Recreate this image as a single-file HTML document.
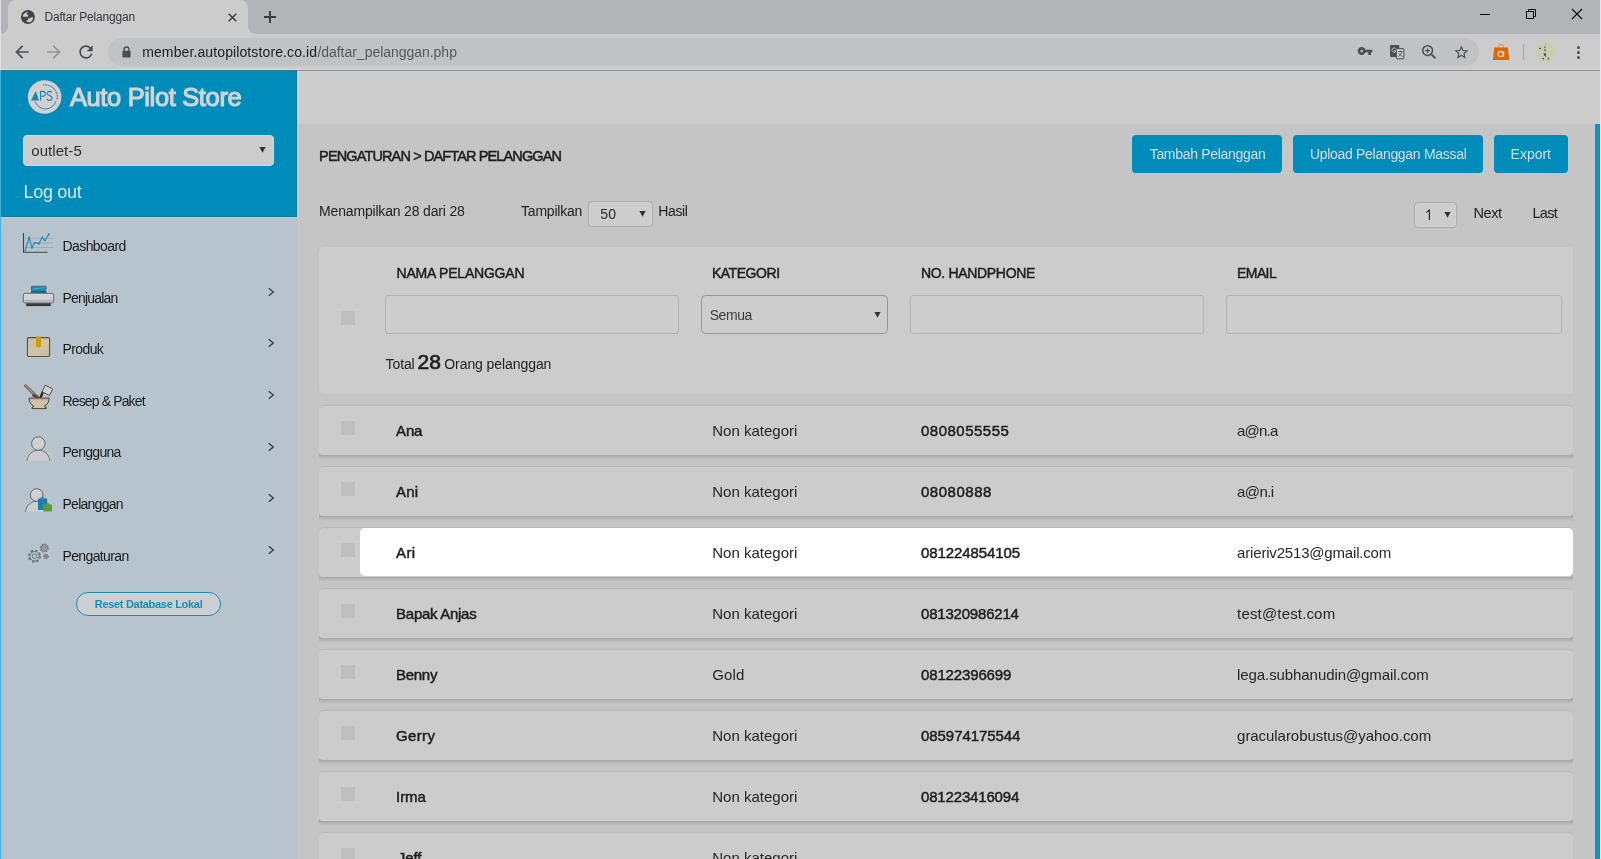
<!DOCTYPE html>
<html><head><meta charset="utf-8"><title>Daftar Pelanggan</title>
<style>
html,body{margin:0;padding:0;}
html{width:1601px;height:859px;overflow:hidden;}
body{width:1601px;height:859px;overflow:hidden;position:relative;background:#c5c5c5;font-family:"Liberation Sans",sans-serif;}
.a{position:absolute;box-sizing:border-box;}
.t{position:absolute;white-space:nowrap;line-height:1;font-family:"Liberation Sans",sans-serif;}
svg{position:absolute;overflow:visible;}
/* chrome */
#tabstrip{left:0;top:0;width:1601px;height:34px;background:#b2b4b8;}
#tab{left:8px;top:0;width:240px;height:34px;background:#cccccc;border-radius:8px 8px 0 0;}
#toolbar{left:0;top:34px;width:1601px;height:36px;background:#cccccc;}
#tbline{left:0;top:70px;width:1601px;height:1px;background:linear-gradient(to right,#2a7c99 0,#2a7c99 297px,#8f9091 297px);}
#tbl2{left:0;top:69px;width:1601px;height:1px;background:#d3d4d5;}
#omni{left:108px;top:38px;width:1371px;height:28px;border-radius:14px;background:#c1c2c3;}
/* page */
#side{left:0;top:71px;width:297px;height:788px;background:#b7c4cd;}
#sidehead{left:0;top:71px;width:297px;height:146px;background:#008cba;}
#topstrip{left:297px;top:71px;width:1304px;height:53px;background:#cdcdcd;}
#mainbg{left:297px;top:124px;width:1304px;height:735px;background:#c5c5c5;}
#sb{left:1595px;top:124px;width:5px;height:735px;background:linear-gradient(to right,#2a7f9c 0,#1a90b8 1px,#1a90b8 4px,#2a7f9c 5px);}
#sbl{left:1592px;top:124px;width:3px;height:735px;background:linear-gradient(to right,#c6c4c4 0,#c8c2c2 2px,#b4cfdb 2px,#b4cfdb 3px);}
#sbr{left:1600px;top:0;width:1px;height:859px;background:#e3eaed;}
#edge0{left:0;top:0;width:1px;height:70px;background:#e0e0e0;}
#edge1{left:0;top:70px;width:1px;height:789px;background:#46b3db;}
.halo{background:#a8d6e6;}
.halod{background:#117a9e;}
.sel{background:#cdcdcd;border:1px solid #ababab;border-radius:4px;box-shadow:inset 0 0 0 1px #d3d3d3;}
.selo{background:#cccccc;border:1px solid #dadada;border-radius:4px;}
.btn{background:#008cba;border-radius:4px;top:135px;height:38px;}
.card{background:#cccccc;border-radius:5px 0 0 5px;box-shadow:0 0 0 .5px #c3c3c3;}
.inp{border:1px solid #b2b2b2;border-radius:3px;background:#cdcdcd;top:295px;height:39px;}
.row{left:319px;width:1254px;height:50px;background:#cccccc;border-radius:5px 5px 4px 4px;border-top:1px solid #bababa;}
.rsh{left:319px;width:1254px;height:10px;background:linear-gradient(to bottom,#c5c5c5 0,#bcbcbc 2.5px,#acacac 4.5px,#a7a7a7 5px,#afafaf 6.2px,#bababa 7.8px,#c2c2c2 9.2px,#c5c5c5 10px);}
.cb{width:14px;height:14px;background:#bfbfbf;left:341px;}
.hl{left:360px;width:1213px;height:48px;background:#ffffff;border-radius:5px;}
#resetbtn{left:76px;top:592px;width:145px;height:24px;border:1.5px solid #1a8db6;border-radius:12px;background:#cbcfd1;}

#txt{position:absolute;left:0;top:0;width:1601px;height:859px;will-change:transform;overflow:hidden;}
#root{position:absolute;left:0;top:0;width:1601px;height:859px;overflow:hidden;}

</style></head>
<body>
<div id="root">
<div class="a" id="tabstrip"></div>
<div class="a" id="tab"></div>
<svg style="left:0;top:26px" width="8" height="8"><path d="M0 8 H8 V0 A8 8 0 0 1 0 8Z" fill="#cccccc"/></svg>
<svg style="left:248px;top:26px" width="8" height="8"><path d="M0 0 V8 H8 A8 8 0 0 1 0 0Z" fill="#cccccc"/></svg>
<div class="a" id="toolbar"></div>
<div class="a" id="tbl2"></div>
<div class="a" id="tbline"></div>
<div class="a" id="omni"></div>
<div class="a" id="edge0"></div>
<!-- globe favicon -->
<svg style="left:20px;top:9px" width="16" height="16" viewBox="0 0 16 16"><circle cx="7.900" cy="8" r="7" fill="#404347"/><path d="M7 3.300C5 3.600 3.200 5 2.800 6.900L2.800 7.700L7.200 7.700C8 7.600 8.600 6.800 8.200 6.200C7.600 5.600 6.600 5.400 6.800 4.800C7 4.200 7.800 4 7.900 3.600Z" fill="#cdcecf"/><path d="M7.400 9.400C9 9.600 10.600 9.200 11.200 8.200L12.900 8.200C13.100 9.800 12.600 11.200 11.600 12.200C10.600 13 9.400 13.300 8.400 13.200C7.200 13 6.400 12.400 6 11.800C7 11.800 8 11.400 8 10.600C8 10 7.600 9.800 7.400 9.400Z" fill="#cdcecf"/></svg>
<!-- tab close -->
<svg style="left:227.5px;top:12.5px" width="9" height="9" viewBox="0 0 9 9"><path d="M.7.7 8.3 8.3M8.3.7.7 8.3" stroke="#3a3d41" stroke-width="1.5" fill="none"/></svg>
<!-- new tab plus -->
<svg style="left:264px;top:11px" width="12" height="12" viewBox="0 0 12 12"><path d="M6 0V12M0 6H12" stroke="#383b3f" stroke-width="1.9" fill="none"/></svg>
<!-- back / forward / reload -->
<svg style="left:12px;top:42px" width="20" height="20" viewBox="0 0 24 24"><path d="M20 11H7.83l5.59-5.59L12 4l-8 8 8 8 1.41-1.41L7.83 13H20v-2z" fill="#4a4d51"/></svg>
<svg style="left:44px;top:42px" width="20" height="20" viewBox="0 0 24 24"><path d="M12 4l-1.41 1.41L16.17 11H4v2h12.17l-5.58 5.59L12 20l8-8z" fill="#939597"/></svg>
<svg style="left:76px;top:42px" width="20" height="20" viewBox="0 0 24 24"><path d="M17.65 6.35A7.958 7.958 0 0 0 12 4c-4.42 0-7.99 3.58-7.99 8s3.57 8 7.99 8c3.73 0 6.84-2.55 7.73-6h-2.08A5.99 5.99 0 0 1 12 18c-3.31 0-6-2.69-6-6s2.69-6 6-6c1.66 0 3.14.69 4.22 1.78L13 11h7V4l-2.35 2.35z" fill="#4a4d51"/></svg>
<!-- lock -->
<svg style="left:121.5px;top:45.5px" width="9" height="12" viewBox="0 0 9 12"><path d="M2.1 5V3.4a2.4 2.4 0 0 1 4.8 0V5" stroke="#4a4d51" stroke-width="1.3" fill="none"/><rect x=".4" y="4.8" width="8.2" height="6.6" rx="1" fill="#4a4d51"/></svg>
<!-- key -->
<svg style="left:1357px;top:43.3px" width="16" height="16" viewBox="0 0 24 24"><path d="M12.65 10C11.83 7.67 9.61 6 7 6c-3.31 0-6 2.69-6 6s2.690 6 6 6c2.61 0 4.83-1.67 5.65-4H17v4h4v-4h2v-4H12.650zM7 14c-1.1 0-2-.9-2-2s.9-2 2-2 2 .9 2 2-.9 2-2 2z" fill="#4a4d51"/></svg>
<!-- translate -->
<svg style="left:1390px;top:45px" width="15" height="15" viewBox="0 0 15 15"><rect x="6.3" y="3.6" width="7.6" height="10.2" rx=".8" fill="#c9cacb" stroke="#4a4d51" stroke-width="1"/><path d="M8.3 6.6h4.2M10.4 5.6v1M11.9 6.8c-.5 2-1.8 3.600-3.600 4.600M9 8.400c.8 1.400 2 2.600 3.600 3.200" stroke="#4a4d51" stroke-width=".9" fill="none"/><path d="M1 .1h7.400a.9.9 0 0 1 .9.9v2.600H6.300v8.400H1a.9.9 0 0 1-.9-.9V1A.9.9 0 0 1 1 .1Z" fill="#4a4d51"/><path d="M5.700 3.700A2.100 2.100 0 1 0 6.100 5.700H4.200" stroke="#c4c5c6" stroke-width=".95" fill="none"/></svg>
<!-- zoom -->
<svg style="left:1420px;top:43px" width="18" height="18" viewBox="0 0 18 18"><circle cx="7.600" cy="7.600" r="4.900" stroke="#4a4d51" stroke-width="1.500" fill="none"/><path d="M11.200 11.200 15.400 15.400" stroke="#4a4d51" stroke-width="1.800"/><path d="M7.600 5.200v4.800M5.200 7.600h4.800" stroke="#4a4d51" stroke-width="1.100"/></svg>
<!-- star -->
<svg style="left:1452.600px;top:44px" width="16.8" height="16.8" viewBox="0 0 24 24"><path d="M22 9.24l-7.190-.62L12 2 9.190 8.630 2 9.240l5.460 4.730L5.820 21 12 17.270 18.180 21l-1.630-7.030L22 9.240zM12 15.400l-3.760 2.270 1-4.280-3.320-2.880 4.380-.38L12 6.100l1.710 4.040 4.380.38-3.320 2.880 1 4.280L12 15.400z" fill="#4a4d51"/></svg>
<!-- extension bag -->
<svg style="left:1492px;top:43px" width="18" height="18" viewBox="0 0 18 18"><path d="M6.600 5V3.700a2.400 2.400 0 0 1 4.800 0V5" stroke="#e08a3a" stroke-width="1" fill="none"/><path d="M2.300 4.600H15.900L17.300 17H.9Z" fill="#d8690a"/><circle cx="8.600" cy="11" r="2.500" stroke="#f0c9a4" stroke-width="1.300" fill="none"/><path d="M11.600 8.100V13.900" stroke="#f0c9a4" stroke-width="1.300"/></svg>
<!-- separator -->
<div class="a" style="left:1523px;top:44px;width:1px;height:16px;background:#a5a6a8;"></div>
<!-- avatar -->
<svg style="left:1536px;top:42px" width="20" height="20" viewBox="0 0 20 20"><circle cx="9.800" cy="10" r="9.800" fill="#c9ccb6"/><path d="M9.200 1.600l.8.400-.5.700ZM8.400 4.200l1.400.5-.6 1.400-.9-.6ZM3 6.200l2.200-.4-.3 1.300-1.700.2ZM8.200 6.900l1.300.3.300 2-1 .4ZM7.400 11.400l2.400-.2.400 2.400-1.800.3-.4-1.200ZM9.800 13.400l.7 1.400-1.100.5ZM6.400 15.800l1.800.5-.3 1.100-1.700-.4ZM11.800 15.600l1.300.4-.7 1.900-.8-.2Z" fill="#4e4a2c"/></svg>
<!-- menu dots -->
<svg style="left:1576px;top:45px" width="5" height="15" viewBox="0 0 5 15"><circle cx="2.500" cy="2.400" r="1.500" fill="#4a4d51"/><circle cx="2.500" cy="7.500" r="1.500" fill="#4a4d51"/><circle cx="2.500" cy="12.600" r="1.500" fill="#4a4d51"/></svg>
<!-- window controls -->
<div class="a" style="left:1480px;top:14px;width:10px;height:1px;background:#0c0c0c;"></div>
<svg style="left:1526px;top:9px" width="10" height="10" viewBox="0 0 10 10"><path d="M2.500 2.500V.5H9.500V7.500H7.500" stroke="#0c0c0c" stroke-width="1" fill="none"/><rect x=".5" y="2.500" width="7" height="7" stroke="#0c0c0c" stroke-width="1" fill="none"/></svg>
<svg style="left:1572px;top:9px" width="10" height="10" viewBox="0 0 10 10"><path d="M0 0 10 10M10 0 0 10" stroke="#0c0c0c" stroke-width="1.100" fill="none"/></svg>

<div class="a" id="side"></div>
<div class="a" id="sidehead"></div>
<div class="a" id="topstrip"></div>
<div class="a" id="mainbg"></div>
<div class="a" id="sbl"></div><div class="a" id="sb"></div><div class="a" id="sbr"></div>
<div class="a halod" style="left:1px;top:216px;width:296px;height:1px;"></div><div class="a halod" style="left:296px;top:71px;width:1px;height:146px;"></div>
<div class="a halo" style="left:1px;top:217px;width:297px;height:1px;"></div><div class="a halo" style="left:297px;top:71px;width:1px;height:146px;"></div>
<div class="a" id="edge1"></div>
<!-- sidebar widgets -->
<div class="a selo" style="left:23px;top:135px;width:251px;height:31px;"></div>
<svg style="left:259px;top:147px" width="8" height="7"><path d="M.4 0H6.600L3.500 5.800Z" fill="#333333"/></svg>
<div class="a" id="resetbtn"></div>
<!-- logo -->
<svg style="left:27px;top:79px" width="36" height="36" viewBox="27 79 36 36">
<circle cx="44.600" cy="97" r="16.800" fill="#d3d0d0"/>
<path d="M31 100.500 35.800 91 38.900 100.500Z" fill="#1587b4"/>
<path d="M40.600 100.500V91.300h2.300a2.300 2.300 0 0 1 0 4.900H40.600" stroke="#1587b4" stroke-width="1.150" fill="none"/>
<path d="M51.700 92.500c-.6-1.500-4.400-1.700-4.400 .9 0 2.600 4.800 1.700 4.800 4.700 0 2.800-4.400 2.900-5.100 .9" stroke="#1587b4" stroke-width="1.150" fill="none"/>
<path d="M35.200 101.400A10.800 10.800 0 0 0 55.900 101.200" stroke="#1f8ab4" stroke-width="1" fill="none"/>
<path d="M43.200 84.900A12.300 12.300 0 0 1 57 99.600" stroke="#2486b0" stroke-width="1.400" stroke-dasharray=".9 .65" fill="none"/>
</svg>
<!-- dashboard -->
<svg style="left:20px;top:230px" width="36" height="26" viewBox="20 230 36 26">
<path d="M25 238.500H53M25 243H53M25 247.500H53" stroke="#a1abb0" stroke-width="1.150"/>
<path d="M23.500 233V252.500M23 252.300H47.500" stroke="#36444c" stroke-width="1.100" fill="none"/>
<path d="M24.800 251.500 29.200 237.600 31.900 248 34.500 242.400 38.900 243.600 42.400 237.200 45 241 48.800 234" stroke="#1a8ab4" stroke-width="1.100" fill="none" stroke-linejoin="round"/>
<g fill="#1a8ab4"><circle cx="29.200" cy="237.600" r="1"/><circle cx="31.900" cy="247.600" r="1"/><circle cx="38.900" cy="243.600" r="1"/><circle cx="42.400" cy="237.400" r="1"/><circle cx="48.800" cy="234.200" r="1"/></g>
</svg>
<!-- penjualan -->
<svg style="left:20px;top:283px" width="36" height="26" viewBox="20 283 36 26">
<path d="M31.500 286.200H45.800L46.800 292.500H30.500Z" fill="#1a8ab4" stroke="#4a5a62" stroke-width=".8"/>
<path d="M32.500 289 45 287.600" stroke="#4fb0d4" stroke-width=".9"/><path d="M31.400 291.700H46" stroke="#12688a" stroke-width="1.500"/><path d="M30.600 289.500 30 292.600M46.700 289.500 47.400 292.600" stroke="#dfe3e5" stroke-width="1"/>
<rect x="23.300" y="293.300" width="30.400" height="9.600" rx="1.600" fill="#d0d4d6" stroke="#5a5e62" stroke-width=".9"/>
<path d="M24.500 300.700H52.500" stroke="#a9aeb1" stroke-width="1.600"/>
<rect x="26.300" y="303.300" width="24.400" height="2.800" fill="#363636"/>
</svg>
<!-- produk -->
<svg style="left:24px;top:334px" width="30" height="26" viewBox="24 334 30 26">
<defs><linearGradient id="bx" x1="0" y1="0" x2="1" y2="1"><stop offset="0" stop-color="#c9bc9c"/><stop offset=".55" stop-color="#d3c6a6"/><stop offset="1" stop-color="#c6b896"/></linearGradient></defs>
<rect x="27.400" y="337.600" width="22.200" height="18.900" rx="1.200" fill="url(#bx)" stroke="#55504a" stroke-width="1.100"/>
<rect x="36" y="336.600" width="5" height="10.600" rx=".8" fill="#cf9a0c"/>
</svg>
<!-- resep -->
<svg style="left:22px;top:382px" width="34" height="30" viewBox="22 382 34 30">
<path d="M25.600 385.700 36.800 396.800" stroke="#5e4a3c" stroke-width="2.800" stroke-linecap="round"/>
<path d="M25.600 385.700 36.800 396.800" stroke="#ad927c" stroke-width="1.500" stroke-linecap="round"/>
<path d="M33.500 395.200 37.800 397.600" stroke="#5e4a3c" stroke-width="3" stroke-linecap="round"/>
<path d="M40.600 397.300 43.200 391.200" stroke="#352c2a" stroke-width="2.500" stroke-linecap="round"/>
<path d="M45.200 385.200 52.800 389 49.400 395.600 42 391.600Z" fill="#d2d0cd" stroke="#5a5048" stroke-width="1" stroke-linejoin="round"/>
<path d="M29 398.100H49.200C49.200 402.500 46.600 405 44.600 405.900L45.200 407.300H46.200V408.600H32V407.300H33L33.600 405.900C31.600 405 29 402.500 29 398.100Z" fill="#d3c0ac" stroke="#4c3e34" stroke-width="1" stroke-linejoin="round"/>
<path d="M30.200 399.700H48" stroke="#bfa993" stroke-width="1"/>
</svg>
<!-- pengguna -->
<svg style="left:24px;top:434px" width="30" height="30" viewBox="24 434 30 30">
<path d="M27 460.800C28 453.800 33 450 38.400 450S48.800 453.800 49.900 460.800Z" fill="#cdcdcd"/>
<path d="M27 460.800C28 453.800 33 450 38.400 450S48.800 453.800 49.900 460.800" fill="none" stroke="#6a6a6a" stroke-width=".9"/>
<circle cx="38.300" cy="443.500" r="6.700" fill="#d0d1d2" stroke="#5a5a5a" stroke-width=".9"/>
</svg>
<!-- pelanggan -->
<svg style="left:22px;top:486px" width="34" height="30" viewBox="22 486 34 30">
<path d="M25.400 511.800C26.400 505 31 501.400 36.600 501.400S44 503 46 507V511.800Z" fill="#cdcdcd"/>
<path d="M25.400 511.800C26.400 505 31 501.400 36.600 501.400" fill="none" stroke="#6a6a6a" stroke-width=".9"/>
<circle cx="36.600" cy="495" r="6.300" fill="#d0d1d2" stroke="#5a5a5a" stroke-width=".9"/>
<path d="M40 498.600c.6-1.300 4.300-1.300 4.900 0" stroke="#1a6f9a" stroke-width=".8" fill="none"/>
<rect x="38" y="498.600" width="9.200" height="11.400" rx=".6" fill="#1a80b4"/>
<path d="M45 504.600c.5-1.100 4-1.100 4.500 0" stroke="#3f7a1c" stroke-width=".8" fill="none"/>
<rect x="43.200" y="504.600" width="8.800" height="6.900" rx=".5" fill="#5e9d2c"/>
</svg>
<!-- pengaturan -->
<svg style="left:24px;top:540px" width="30" height="26" viewBox="24 540 30 26">
<g fill="none" stroke="#6c7074" stroke-width=".95">
<circle cx="34.500" cy="556.200" r="5.300" stroke-dasharray="2.100 2.060" stroke-width="2.600"/>
<circle cx="34.500" cy="556.200" r="4.600" fill="#b7c4cd" stroke="none"/>
<circle cx="34.500" cy="556.200" r="4.700"/>
<circle cx="34.500" cy="556.200" r="2.300"/>
<circle cx="44.300" cy="548" r="3.500" stroke-dasharray="1.400 1.350" stroke-width="2"/>
<circle cx="44.300" cy="548" r="3" fill="#b7c4cd" stroke="none"/>
<circle cx="44.300" cy="548" r="3.100"/>
<circle cx="44.300" cy="548" r="1.400"/>
<circle cx="45.900" cy="556.400" r="2.100" stroke-dasharray="1 .9" stroke-width="1.400"/>
<circle cx="45.900" cy="556.400" r="1.700" fill="#b7c4cd" stroke="none"/>
<circle cx="45.900" cy="556.400" r="1.700"/>
<circle cx="45.900" cy="556.400" r=".6"/>
</g>
</svg>
<svg style="left:267px;top:287.1px" width="8" height="10" viewBox="0 0 8 10"><path d="M1.800 1.200 6.300 5 1.800 8.800" stroke="#34404c" stroke-width="1.350" fill="none"/></svg>
<svg style="left:267px;top:338.3px" width="8" height="10" viewBox="0 0 8 10"><path d="M1.800 1.200 6.300 5 1.800 8.800" stroke="#34404c" stroke-width="1.350" fill="none"/></svg>
<svg style="left:267px;top:390.2px" width="8" height="10" viewBox="0 0 8 10"><path d="M1.800 1.200 6.300 5 1.800 8.800" stroke="#34404c" stroke-width="1.350" fill="none"/></svg>
<svg style="left:267px;top:442.0px" width="8" height="10" viewBox="0 0 8 10"><path d="M1.800 1.200 6.300 5 1.800 8.800" stroke="#34404c" stroke-width="1.350" fill="none"/></svg>
<svg style="left:267px;top:493.3px" width="8" height="10" viewBox="0 0 8 10"><path d="M1.800 1.200 6.300 5 1.800 8.800" stroke="#34404c" stroke-width="1.350" fill="none"/></svg>
<svg style="left:267px;top:545.2px" width="8" height="10" viewBox="0 0 8 10"><path d="M1.800 1.200 6.300 5 1.800 8.800" stroke="#34404c" stroke-width="1.350" fill="none"/></svg>

<!-- main widgets -->
<div class="a btn" style="left:1132px;width:150px;"></div>
<div class="a btn" style="left:1293px;width:190px;"></div>
<div class="a btn" style="left:1494px;width:74px;"></div>
<div class="a sel" style="left:588px;top:201px;width:65px;height:26px;"></div>
<svg style="left:638.5px;top:210.9px" width="8" height="7"><path d="M.4 0H6.600L3.500 5.800Z" fill="#333333"/></svg>
<div class="a sel" style="left:1414px;top:202px;width:43px;height:26px;"></div>
<svg style="left:1424px;top:208px" width="8" height="13" viewBox="0 0 8 13"><!-- one-glyph --><path d="M2.200 4.500C3.500 4 4.400 3.200 4.900 2.100H5.400V11.900" stroke="#2c2c2c" stroke-width="1.250" fill="none"/></svg>
<svg style="left:1443.5px;top:212px" width="8" height="7"><path d="M.4 0H6.600L3.500 5.800Z" fill="#333333"/></svg>
<div class="a card" style="left:319px;top:247px;width:1254px;height:146.6px;"></div>
<div class="a cb" style="top:311px;"></div>
<div class="a inp" style="left:385px;width:294px;"></div>
<div class="a inp" style="left:701px;width:187px;border-color:#979797;border-radius:4.5px;"></div>
<svg style="left:873.7px;top:311.9px" width="8" height="7"><path d="M.4 0H6.600L3.500 5.800Z" fill="#333333"/></svg>
<div class="a inp" style="left:910px;width:294px;"></div>
<div class="a inp" style="left:1226px;width:336px;"></div>
<div class="a rsh" style="top:450px"></div>
<div class="a row" style="top:405px"></div>
<div class="a cb" style="top:421px"></div>
<div class="a rsh" style="top:511px"></div>
<div class="a row" style="top:466px"></div>
<div class="a cb" style="top:482px"></div>
<div class="a rsh" style="top:572px"></div>
<div class="a row" style="top:527px"></div>
<div class="a hl" style="top:528px"></div>
<div class="a cb" style="top:543px"></div>
<div class="a rsh" style="top:633px"></div>
<div class="a row" style="top:588px"></div>
<div class="a cb" style="top:604px"></div>
<div class="a rsh" style="top:694px"></div>
<div class="a row" style="top:649px"></div>
<div class="a cb" style="top:665px"></div>
<div class="a rsh" style="top:755px"></div>
<div class="a row" style="top:710px"></div>
<div class="a cb" style="top:726px"></div>
<div class="a rsh" style="top:816px"></div>
<div class="a row" style="top:771px"></div>
<div class="a cb" style="top:787px"></div>
<div class="a rsh" style="top:877px"></div>
<div class="a row" style="top:832px"></div>
<div class="a cb" style="top:848px"></div>

<!-- text -->
<div id="txt">
<span id="tabt" class="t" style="left:44.4px;top:11.04px;font-size:12px;font-weight:400;color:#34373b;letter-spacing:-0.175px;">Daftar Pelanggan</span>
<span id="url1" class="t" style="left:142.2px;top:45.35px;font-size:14px;font-weight:400;color:#1d1e20;letter-spacing:0.112px;">member.autopilotstore.co.id</span>
<span id="url2" class="t" style="left:317.4px;top:45.35px;font-size:14px;font-weight:400;color:#55595d;letter-spacing:-0.030px;">/daftar_pelanggan.php</span>
<span id="brand" class="t" style="left:69.9px;top:84.61px;font-size:25.5px;font-weight:400;color:#d0d4d6;letter-spacing:-0.355px;-webkit-text-stroke:1.15px #d0d4d6;">Auto Pilot Store</span>
<span id="outlet" class="t" style="left:31.3px;top:142.50px;font-size:15px;font-weight:400;color:#303030;letter-spacing:0.057px;">outlet-5</span>
<span id="logout" class="t" style="left:23.6px;top:183.16px;font-size:18px;font-weight:400;color:#d3e6ee;letter-spacing:-0.323px;">Log out</span>
<span id="m0" class="t" style="left:62.5px;top:238.95px;font-size:14px;font-weight:400;color:#1b1b1b;letter-spacing:-0.578px;">Dashboard</span>
<span id="m1" class="t" style="left:62.5px;top:290.85px;font-size:14px;font-weight:400;color:#1b1b1b;letter-spacing:-0.798px;">Penjualan</span>
<span id="m2" class="t" style="left:62.5px;top:341.75px;font-size:14px;font-weight:400;color:#1b1b1b;letter-spacing:-0.610px;">Produk</span>
<span id="m3" class="t" style="left:62.5px;top:393.85px;font-size:14px;font-weight:400;color:#1b1b1b;letter-spacing:-0.861px;">Resep &amp; Paket</span>
<span id="m4" class="t" style="left:62.5px;top:445.35px;font-size:14px;font-weight:400;color:#1b1b1b;letter-spacing:-0.718px;">Pengguna</span>
<span id="m5" class="t" style="left:62.5px;top:496.85px;font-size:14px;font-weight:400;color:#1b1b1b;letter-spacing:-0.739px;">Pelanggan</span>
<span id="m6" class="t" style="left:62.5px;top:548.75px;font-size:14px;font-weight:400;color:#1b1b1b;letter-spacing:-0.631px;">Pengaturan</span>
<span id="reset" class="t" style="left:94.8px;top:598.59px;font-size:11px;font-weight:700;color:#1a8db6;letter-spacing:-0.306px;">Reset Database Lokal</span>
<span id="bc" class="t" style="left:319.1px;top:148.83px;font-size:14.5px;font-weight:400;color:#1e1e1e;letter-spacing:-0.874px;-webkit-text-stroke:0.48px #1e1e1e;">PENGATURAN &gt; DAFTAR PELANGGAN</span>
<span id="men" class="t" style="left:319.1px;top:203.95px;font-size:14px;font-weight:400;color:#222;letter-spacing:-0.178px;">Menampilkan 28 dari 28</span>
<span id="tam" class="t" style="left:521.0px;top:204.05px;font-size:14px;font-weight:400;color:#222;letter-spacing:-0.203px;">Tampilkan</span>
<span id="s50" class="t" style="left:600.2px;top:207.05px;font-size:14px;font-weight:400;color:#2a2a2a;letter-spacing:0.311px;">50</span>
<span id="has" class="t" style="left:658.3px;top:204.05px;font-size:14px;font-weight:400;color:#222;letter-spacing:-0.385px;">Hasil</span>
<span id="next" class="t" style="left:1473.4px;top:205.83px;font-size:14.5px;font-weight:400;color:#222;letter-spacing:-0.357px;">Next</span>
<span id="last" class="t" style="left:1532.4px;top:205.83px;font-size:14.5px;font-weight:400;color:#222;letter-spacing:-0.655px;">Last</span>
<span id="b1" class="t" style="left:1149.7px;top:146.95px;font-size:14px;font-weight:400;color:#d6dde0;letter-spacing:-0.304px;">Tambah Pelanggan</span>
<span id="b2" class="t" style="left:1309.9px;top:146.95px;font-size:14px;font-weight:400;color:#d6dde0;letter-spacing:-0.298px;">Upload Pelanggan Massal</span>
<span id="b3" class="t" style="left:1510.6px;top:146.95px;font-size:14px;font-weight:400;color:#d6dde0;letter-spacing:-0.011px;">Export</span>
<span id="h1" class="t" style="left:396.6px;top:265.85px;font-size:14px;font-weight:400;color:#1e1e1e;letter-spacing:-0.215px;-webkit-text-stroke:0.46px #1e1e1e;">NAMA PELANGGAN</span>
<span id="h2" class="t" style="left:711.9px;top:265.85px;font-size:14px;font-weight:400;color:#1e1e1e;letter-spacing:-0.452px;-webkit-text-stroke:0.46px #1e1e1e;">KATEGORI</span>
<span id="h3" class="t" style="left:921.0px;top:265.85px;font-size:14px;font-weight:400;color:#1e1e1e;letter-spacing:-0.326px;-webkit-text-stroke:0.46px #1e1e1e;">NO. HANDPHONE</span>
<span id="h4" class="t" style="left:1237.1px;top:265.85px;font-size:14px;font-weight:400;color:#1e1e1e;letter-spacing:-0.603px;-webkit-text-stroke:0.46px #1e1e1e;">EMAIL</span>
<span id="sem" class="t" style="left:709.7px;top:307.95px;font-size:14px;font-weight:400;color:#3a3a3a;letter-spacing:-0.412px;">Semua</span>
<span id="tot" class="t" style="left:385.6px;top:357.05px;font-size:14px;font-weight:400;color:#222;letter-spacing:-0.116px;">Total</span>
<span id="t28" class="t" style="left:417.6px;top:351.12px;font-size:21px;font-weight:400;color:#1e1e1e;letter-spacing:-0.080px;-webkit-text-stroke:0.69px #1e1e1e;">28</span>
<span id="ora" class="t" style="left:444.3px;top:357.05px;font-size:14px;font-weight:400;color:#222;letter-spacing:-0.080px;">Orang pelanggan</span>
<span id="n0" class="t" style="left:396.1px;top:423.10px;font-size:15px;font-weight:400;color:#1e1e1e;letter-spacing:-0.168px;-webkit-text-stroke:0.49px #1e1e1e;">Ana</span>
<span id="k0" class="t" style="left:712.2px;top:423.10px;font-size:15px;font-weight:400;color:#262626;letter-spacing:0.011px;">Non kategori</span>
<span id="p0_" class="t" style="left:921.0px;top:423.10px;font-size:15px;font-weight:400;color:#1e1e1e;letter-spacing:0.486px;-webkit-text-stroke:0.49px #1e1e1e;">0808055555</span>
<span id="e0" class="t" style="left:1237.1px;top:423.10px;font-size:15px;font-weight:400;color:#262626;letter-spacing:-0.824px;">a@n.a</span>
<span id="n1" class="t" style="left:396.1px;top:484.10px;font-size:15px;font-weight:400;color:#1e1e1e;letter-spacing:0.171px;-webkit-text-stroke:0.49px #1e1e1e;">Ani</span>
<span id="k1" class="t" style="left:712.2px;top:484.10px;font-size:15px;font-weight:400;color:#262626;letter-spacing:0.011px;">Non kategori</span>
<span id="p1_" class="t" style="left:921.0px;top:484.10px;font-size:15px;font-weight:400;color:#1e1e1e;letter-spacing:0.519px;-webkit-text-stroke:0.49px #1e1e1e;">08080888</span>
<span id="e1" class="t" style="left:1237.1px;top:484.10px;font-size:15px;font-weight:400;color:#262626;letter-spacing:-0.624px;">a@n.i</span>
<span id="n2" class="t" style="left:396.1px;top:545.10px;font-size:15px;font-weight:400;color:#1e1e1e;letter-spacing:0.385px;-webkit-text-stroke:0.49px #1e1e1e;">Ari</span>
<span id="k2" class="t" style="left:712.2px;top:545.10px;font-size:15px;font-weight:400;color:#262626;letter-spacing:0.011px;">Non kategori</span>
<span id="p2_" class="t" style="left:921.0px;top:545.10px;font-size:15px;font-weight:400;color:#1e1e1e;letter-spacing:-0.092px;-webkit-text-stroke:0.49px #1e1e1e;">081224854105</span>
<span id="e2" class="t" style="left:1237.1px;top:545.10px;font-size:15px;font-weight:400;color:#262626;letter-spacing:-0.181px;">arieriv2513@gmail.com</span>
<span id="n3" class="t" style="left:396.1px;top:606.10px;font-size:15px;font-weight:400;color:#1e1e1e;letter-spacing:-0.282px;-webkit-text-stroke:0.49px #1e1e1e;">Bapak Anjas</span>
<span id="k3" class="t" style="left:712.2px;top:606.10px;font-size:15px;font-weight:400;color:#262626;letter-spacing:0.011px;">Non kategori</span>
<span id="p3_" class="t" style="left:921.0px;top:606.10px;font-size:15px;font-weight:400;color:#1e1e1e;letter-spacing:-0.201px;-webkit-text-stroke:0.49px #1e1e1e;">081320986214</span>
<span id="e3" class="t" style="left:1237.1px;top:606.10px;font-size:15px;font-weight:400;color:#262626;letter-spacing:0.162px;">test@test.com</span>
<span id="n4" class="t" style="left:396.1px;top:667.10px;font-size:15px;font-weight:400;color:#1e1e1e;letter-spacing:-0.309px;-webkit-text-stroke:0.49px #1e1e1e;">Benny</span>
<span id="k4" class="t" style="left:712.2px;top:667.10px;font-size:15px;font-weight:400;color:#262626;letter-spacing:0.128px;">Gold</span>
<span id="p4_" class="t" style="left:921.0px;top:667.10px;font-size:15px;font-weight:400;color:#1e1e1e;letter-spacing:-0.142px;-webkit-text-stroke:0.49px #1e1e1e;">08122396699</span>
<span id="e4" class="t" style="left:1237.1px;top:667.10px;font-size:15px;font-weight:400;color:#262626;letter-spacing:-0.087px;">lega.subhanudin@gmail.com</span>
<span id="n5" class="t" style="left:396.1px;top:728.10px;font-size:15px;font-weight:400;color:#1e1e1e;letter-spacing:0.340px;-webkit-text-stroke:0.49px #1e1e1e;">Gerry</span>
<span id="k5" class="t" style="left:712.2px;top:728.10px;font-size:15px;font-weight:400;color:#262626;letter-spacing:0.011px;">Non kategori</span>
<span id="p5_" class="t" style="left:921.0px;top:728.10px;font-size:15px;font-weight:400;color:#1e1e1e;letter-spacing:-0.059px;-webkit-text-stroke:0.49px #1e1e1e;">085974175544</span>
<span id="e5" class="t" style="left:1237.1px;top:728.10px;font-size:15px;font-weight:400;color:#262626;letter-spacing:-0.054px;">gracularobustus@yahoo.com</span>
<span id="n6" class="t" style="left:396.1px;top:789.10px;font-size:15px;font-weight:400;color:#1e1e1e;letter-spacing:-0.100px;-webkit-text-stroke:0.49px #1e1e1e;">Irma</span>
<span id="k6" class="t" style="left:712.2px;top:789.10px;font-size:15px;font-weight:400;color:#262626;letter-spacing:0.011px;">Non kategori</span>
<span id="p6_" class="t" style="left:921.0px;top:789.10px;font-size:15px;font-weight:400;color:#1e1e1e;letter-spacing:-0.167px;-webkit-text-stroke:0.49px #1e1e1e;">081223416094</span>
<span id="n7" class="t" style="left:397.8px;top:850.10px;font-size:15px;font-weight:400;color:#1e1e1e;letter-spacing:-0.102px;-webkit-text-stroke:0.49px #1e1e1e;">Jeff</span>
<span id="k7" class="t" style="left:712.2px;top:850.10px;font-size:15px;font-weight:400;color:#262626;letter-spacing:0.011px;">Non kategori</span>
</div>
</div>
</body></html>
